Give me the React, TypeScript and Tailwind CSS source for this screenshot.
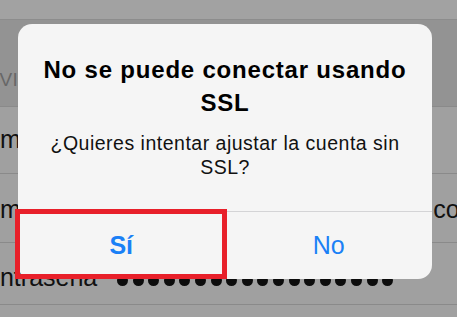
import React from "react";

const font = { fontFamily: '"Liberation Sans", Arial, sans-serif' };

export default function App() {
  const dots = Array.from({ length: 18 });
  return (
    <div
      className="relative w-[457px] h-[317px] overflow-hidden bg-[#a0a0a0] text-[#111]"
      style={font}
    >
      {/* background settings page */}
      <div className="flex flex-col">
        <div className="h-[20px] border-b border-[#8c8c8c] bg-[#a2a2a2]" />
        <div className="h-[87px] bg-[#939393] border-b border-[#8a8a8a] flex items-end pb-[12px] overflow-hidden whitespace-nowrap">
          <span className="text-[19px] text-[#676767] ml-[-40px] tracking-[0.3px]">SERVIDOR DE CORREO ENTRANTE</span>
        </div>
        <div className="h-[67px] border-b border-[#8a8a8a] flex items-center overflow-hidden whitespace-nowrap">
          <span className="text-[25px] ml-[-32px]">Nombre de host</span>
        </div>
        <div className="h-[69px] border-b border-[#8a8a8a] flex items-center justify-between overflow-hidden whitespace-nowrap pt-[4px]">
          <span className="text-[25px] ml-[-32px]">Nombre de usuario</span>
          <span className="text-[25px] mr-[-47px]">correo</span>
        </div>
        <div className="h-[62px] border-b border-[#8a8a8a] flex items-center overflow-hidden whitespace-nowrap pt-[8px]">
          <span className="text-[25px] ml-[-32px] w-[149px] shrink-0">Contraseña</span>
          <div className="flex gap-[4.6px] mt-[6px]">
            {dots.map((_, i) => (
              <span key={i} className="w-[11px] h-[11px] rounded-full bg-[#0c0c0c]" />
            ))}
          </div>
        </div>
      </div>

      {/* alert dialog */}
      <div className="absolute left-[18px] top-[24px] w-[414px] h-[255px] rounded-[14px] bg-[#f5f5f5] flex flex-col overflow-hidden">
        <div className="flex-1 flex flex-col items-center pt-[29px] px-[16px] text-center">
          <div className="text-[24px] leading-[33px] font-bold tracking-[0.8px] text-black">
            No se puede conectar usando
            <br />
            SSL
          </div>
          <div className="mt-[12px] text-[19.5px] leading-[24px] tracking-[0.5px] text-[#111]">
            ¿Quieres intentar ajustar la cuenta sin
            <br />
            SSL?
          </div>
        </div>
        <div className="h-[68px] border-t border-[#d4d4d6] flex">
          <div className="flex-1 flex items-center justify-center border-r border-[#d4d4d6] text-[25px] font-bold text-[#1a80f6]">
            Sí
          </div>
          <div className="flex-1 flex items-center justify-center text-[25px] text-[#1a80f6]">
            No
          </div>
        </div>
      </div>

      {/* red annotation box */}
      <div className="absolute left-[15px] top-[209px] w-[212px] h-[70px] border-[5px] border-[#e8202a]" />
    </div>
  );
}
